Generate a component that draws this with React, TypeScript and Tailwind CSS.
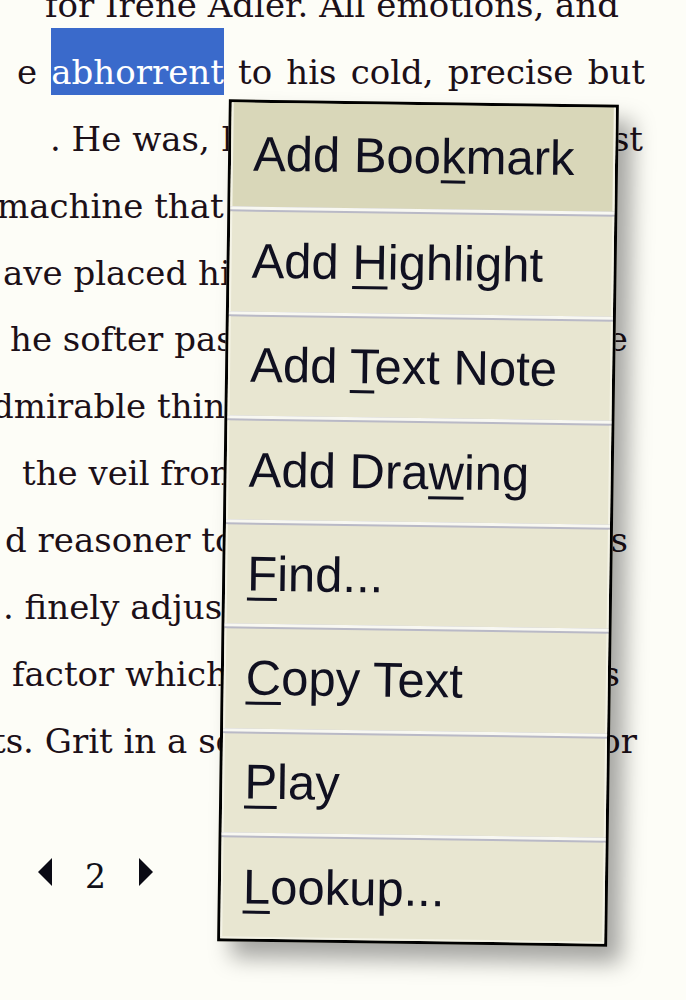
import React from 'react';

type Line = { text: string; left: number; tail?: string; right?: number };

// visible slice of each line, cropped on the left by the window edge;
// `tail` is the word peeking out to the right of the menu
const LINES: Line[] = [
  { text: 'for Irene Adler. All emotions, and', left: 45 },
  { text: '', left: 17 }, // line with the selection, rendered separately
  { text: '. He was, I take it, the', left: 50, tail: 'most', right: 643 },
  { text: 'machine that the world has seen', left: -3 },
  { text: 'ave placed himself in a false', left: 3 },
  { text: 'he softer passions, save with a', left: 10, tail: 'were', right: 628 },
  { text: 'dmirable things for the observer', left: -8 },
  { text: 'the veil from men\u2019s motives and', left: 22 },
  { text: 'd reasoner to admit such', left: 5, tail: 'his', right: 628 },
  { text: '. finely adjusted temperament', left: 3 },
  { text: 'factor which might throw a', left: 12, tail: 'his', right: 620 },
  { text: 'ts. Grit in a sensitive', left: -8, tail: 'or', right: 637 },
];

const MENU: { before: string; key: string; after: string }[] = [
  { before: 'Add Boo', key: 'k', after: 'mark' },
  { before: 'Add ', key: 'H', after: 'ighlight' },
  { before: 'Add ', key: 'T', after: 'ext Note' },
  { before: 'Add Dra', key: 'w', after: 'ing' },
  { before: '', key: 'F', after: 'ind...' },
  { before: '', key: 'C', after: 'opy Text' },
  { before: '', key: 'P', after: 'lay' },
  { before: '', key: 'L', after: 'ookup...' },
];

const PageLine: React.FC<{ line: Line }> = ({ line }) => (
  <div
    className="flex justify-between whitespace-nowrap leading-[66.9px] h-[66.9px]"
    style={{ marginLeft: line.left, width: (line.right ?? 640) - line.left }}
  >
    <span>{line.text}</span>
    {line.tail && <span>{line.tail}</span>}
  </div>
);

const ContextMenu: React.FC = () => (
  <div className="absolute left-[223px] top-[102px] w-[390px] h-[842px] rotate-[0.8deg] border-[3px] border-black bg-[#e8e6d1] shadow-[14px_16px_22px_rgba(0,0,0,0.35)] flex flex-col font-['Liberation_Sans',Arial,sans-serif] text-[49px] text-[#101020]">
    {MENU.map((item, i) => (
      <div
        key={item.key}
        className={`flex-1 flex flex-col ${i === 0 ? 'bg-[#d9d7b9]' : ''}`}
      >
        {i > 0 && (
          <div className="h-[5px] shrink-0 border-t-[3px] border-[#f8f8f2] bg-[#b9b9c6]" />
        )}
        <div className="flex-1 flex items-center pl-[20px] border-x-2 border-[#f4f3e6]">
          <span>
            {item.before}
            <span className="underline decoration-[3px] underline-offset-[7px]">{item.key}</span>
            {item.after}
          </span>
        </div>
      </div>
    ))}
    <div className="h-[2px] shrink-0 bg-[#f4f3e6]" />
  </div>
);

const Pager: React.FC = () => (
  <div className="flex items-center h-[34px] mt-[80px] pl-[37px] gap-[32px]">
    <svg width="16" height="28" viewBox="0 0 16 28">
      <polygon points="15,0 1,14 15,28" fill="#0a0a14" />
    </svg>
    <span className="text-[33px] leading-none text-[#101018] pt-[10px]">2</span>
    <svg width="16" height="28" viewBox="0 0 16 28">
      <polygon points="1,0 15,14 1,28" fill="#0a0a14" />
    </svg>
  </div>
);

export default function App() {
  return (
    <div className="relative w-[686px] h-[1000px] overflow-hidden bg-[#fdfdf7] font-['DejaVu_Serif',Georgia,serif] text-[34px] text-[#1c1018]">
      <div className="mt-[-28px]">
        {LINES.map((line, i) =>
          i === 1 ? (
            <div
              key={i}
              className="flex justify-between whitespace-nowrap leading-[66.9px] h-[66.9px] ml-[17px] w-[628px]"
            >
              <span>e</span>
              <span className="bg-[#3a6acb] text-white h-[67px] -mt-[11px] leading-[89px]">abhorrent</span>
              <span>to</span>
              <span>his</span>
              <span>cold,</span>
              <span>precise</span>
              <span>but</span>
            </div>
          ) : (
            <PageLine key={i} line={line} />
          )
        )}
        <Pager />
      </div>
      <ContextMenu />
    </div>
  );
}
